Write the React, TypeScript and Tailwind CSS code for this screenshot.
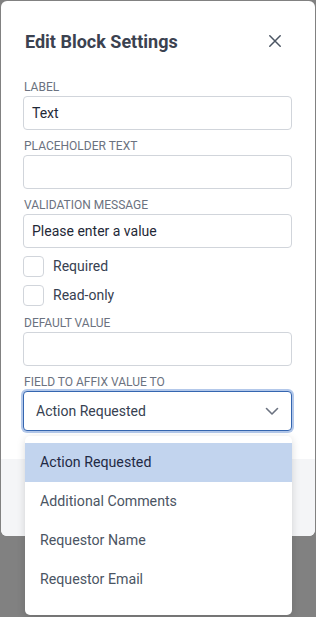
import React from "react";

const font = { fontFamily: "Roboto, 'Noto Sans', sans-serif" };

function Label({ children, mt }: { children: React.ReactNode; mt: string }) {
  return (
    <div className={`${mt} pl-px text-[12px] leading-[17px] text-[#6b7280] uppercase`}>{children}</div>
  );
}

function Input({ value }: { value?: string }) {
  return (
    <div className="h-[34px] w-[269px] rounded-[4px] border border-[#d1d5db] bg-white px-[8px] flex items-center text-[14px] text-[#1f2937]">
      {value}
    </div>
  );
}

function Check({ label, mt }: { label: string; mt: string }) {
  return (
    <div className={`${mt} flex items-center h-[21px]`}>
      <div className="w-[21px] h-[21px] rounded-[4px] border border-[#d1d5db] bg-white" />
      <span className="ml-[9px] text-[14px] text-[#374151]">{label}</span>
    </div>
  );
}

export default function App() {
  const items = ["Action Requested", "Additional Comments", "Requestor Name", "Requestor Email"];
  return (
    <div className="h-[617px] w-[316px] bg-[#818181] p-px overflow-hidden" style={font}>
      <div className="w-[314px] h-[535px] bg-white rounded-[6px] flex flex-col">
        <div className="px-[22px] flex flex-col">
          <div className="mt-[26px] h-[28px] flex items-center justify-between pl-[2px]">
            <span className="text-[18px] font-bold text-[#3b4250]">Edit Block Settings</span>
            <svg width="12" height="12" viewBox="0 0 12 12" className="mr-[12px]">
              <path d="M0.8 0.8L11.2 11.2M11.2 0.8L0.8 11.2" stroke="#4b5563" strokeWidth="1.5" strokeLinecap="round" />
            </svg>
          </div>
          <Label mt="mt-[24px]">Label</Label>
          <Input value="Text" />
          <Label mt="mt-[8px]">Placeholder Text</Label>
          <Input />
          <Label mt="mt-[8px]">Validation Message</Label>
          <Input value="Please enter a value" />
          <Check mt="mt-[8px]" label="Required" />
          <Check mt="mt-[8px]" label="Read-only" />
          <Label mt="mt-[9px]">Default Value</Label>
          <Input />
          <Label mt="mt-[8px]">Field to affix value to</Label>
          <div className="relative">
            <div className="h-[40px] w-[269px] rounded-[4px] border border-[#3566b0] ring-2 ring-[#b3c8ea] bg-white pl-[12px] pr-[12px] flex items-center justify-between text-[14px] text-[#374151]">
              <span>Action Requested</span>
              <svg width="14" height="9" viewBox="0 0 14 9">
                <path d="M1.5 1.5L7 7L12.5 1.5" fill="none" stroke="#6b7280" strokeWidth="1.6" strokeLinecap="round" strokeLinejoin="round" />
              </svg>
            </div>
            <div className="absolute left-[2px] top-[45px] w-[267px] h-[179px] bg-white rounded-[5px] shadow-[0_2px_8px_rgba(0,0,0,0.15)] overflow-hidden pt-[7px] z-10">
              {items.map((t, i) => (
                <div
                  key={t}
                  className={`h-[39px] flex items-center pl-[15px] pt-px text-[14.2px] ${i === 0 ? "bg-[#c2d4ee] text-[#1f2a44]" : "text-[#4b5563]"}`}
                >
                  {t}
                </div>
              ))}
            </div>
          </div>
        </div>
        <div className="mt-[28px] flex-1 bg-[#f4f5f7] rounded-b-[6px]" />
      </div>
    </div>
  );
}
